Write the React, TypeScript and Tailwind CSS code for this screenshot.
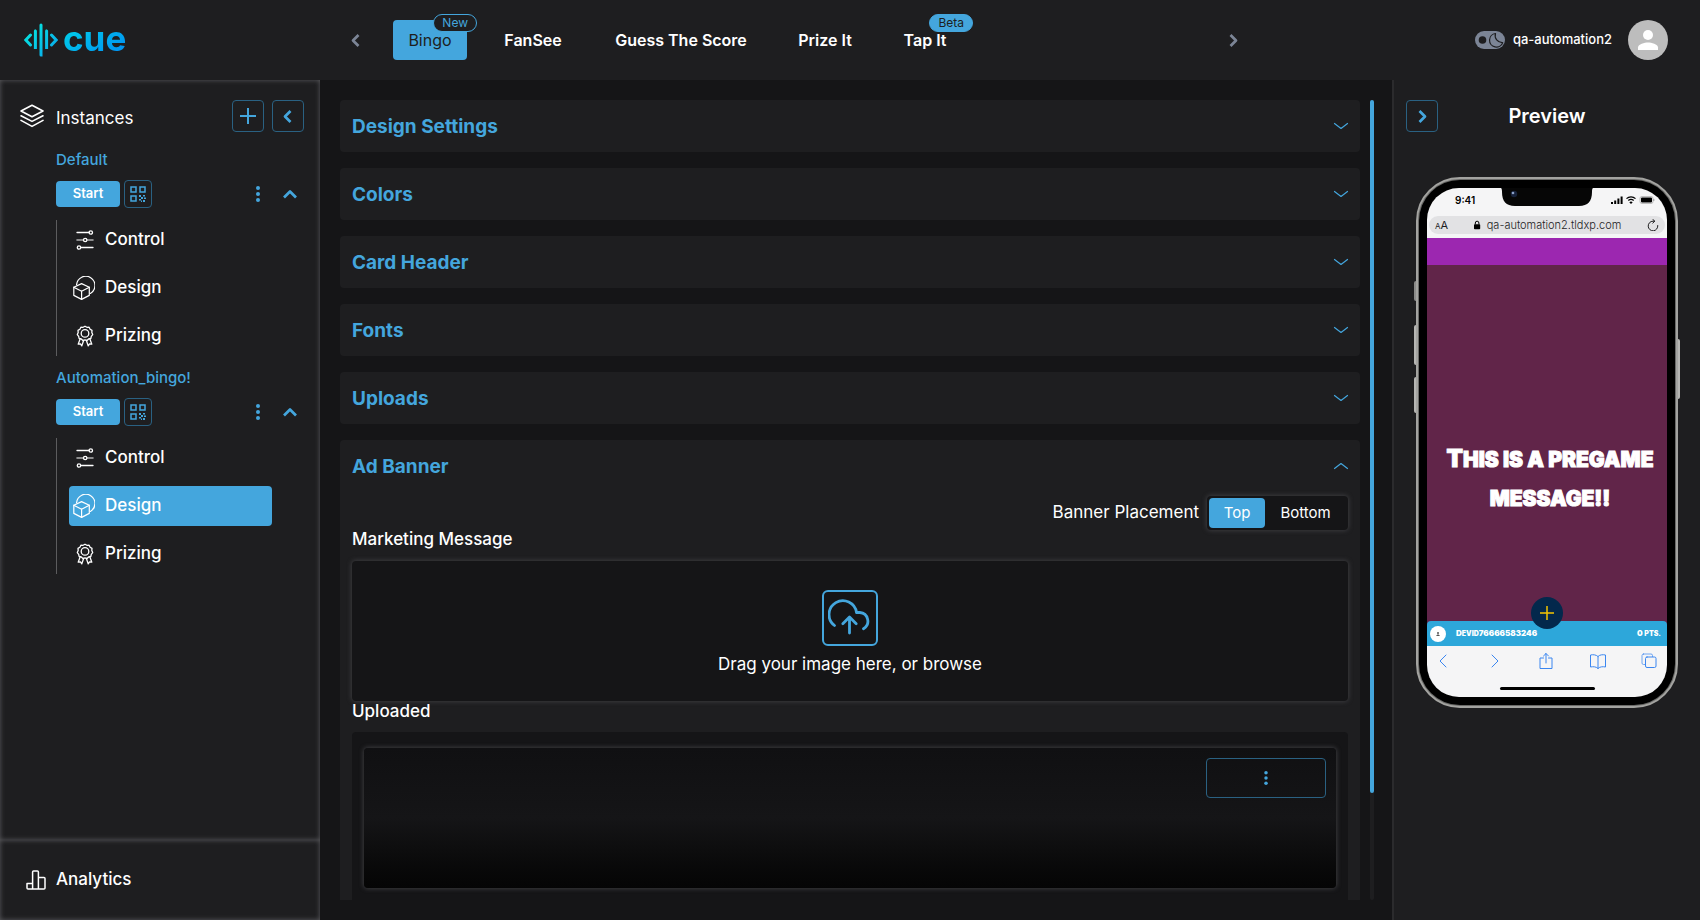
import React from "react";
import type { ReactNode } from "react";

const icon = {
  fill: "none",
  stroke: "currentColor",
  strokeLinecap: "round" as const,
  strokeLinejoin: "round" as const,
};

function Chevron({ dir }: { dir: "left" | "right" | "up" }) {
  const d = { left: "M10.5 3 5 8.5l5.5 5.5", right: "M5.5 3 11 8.5 5.5 14", up: "M2 11.5 8 5.5l6 6" }[dir];
  return (
    <svg viewBox="0 0 16 17" className="h-[17px] w-4" {...icon} strokeLinecap="butt" strokeWidth="2.7" aria-hidden="true">
      <path d={d} />
    </svg>
  );
}

function ThinChevron({ up }: { up?: boolean }) {
  return (
    <svg viewBox="0 0 16 8" className="h-2 w-4" {...icon} strokeWidth="1.2" aria-hidden="true">
      <path d={up ? "M1.5 6.5 8 1.5l6.5 5" : "M1.5 1.5 8 6.5l6.5-5"} />
    </svg>
  );
}

function Dots({ className }: { className: string }) {
  return (
    <svg viewBox="0 0 4 16" className={className} fill="currentColor" aria-hidden="true">
      <circle cx="2" cy="2" r="2" />
      <circle cx="2" cy="8" r="2" />
      <circle cx="2" cy="14" r="2" />
    </svg>
  );
}

function LogoMark() {
  return (
    <svg viewBox="0 0 34 34" className="h-[34px] w-[34px]" fill="none" strokeLinecap="round" aria-hidden="true">
      <defs>
        <linearGradient id="mark" x1="0" y1="0" x2="34" y2="34" gradientUnits="userSpaceOnUse">
          <stop offset="0" stopColor="#04f0dc" />
          <stop offset="1" stopColor="#0aa0ee" />
        </linearGradient>
      </defs>
      <g stroke="url(#mark)" strokeWidth="3">
        <path d="M6.5 12 1.8 17l4.7 5" />
        <path d="M11.4 8v18L11.41 8" />
        <path d="M17.01 2v30L17 32" />
        <path d="M22.6 8v18L22.61 8" />
        <path d="m27.5 12 4.7 5-4.7 5" />
      </g>
    </svg>
  );
}

function LayersIcon() {
  return (
    <svg viewBox="0 0 24 24" className="h-6 w-6" {...icon} strokeWidth="1.6" aria-hidden="true">
      <path d="M12 1.2 23 7 12 12.8 1 7Z" />
      <path d="m1 11.8 11 5.6 11-5.6" />
      <path d="m1 16.4 11 6 11-6" />
    </svg>
  );
}

function QrIcon() {
  return (
    <svg viewBox="0 0 16 16" className="h-4 w-4" fill="none" stroke="currentColor" strokeWidth="1.5" aria-hidden="true">
      <path d="M1 1h5v5H1zM10 1h5v5h-5zM1 10h5v5H1z" />
      <path
        d="M9 9h2v2H9zM13 9h2v1.5h-2zM11 11h2v2h-2zM9 13h2v1.5H9zM14 11.5h2v1.5h-2zM13 14h2v2h-2zM11 14.5h1V16h-1z"
        fill="currentColor"
        stroke="none"
      />
    </svg>
  );
}

function ControlIcon() {
  return (
    <svg viewBox="0 0 22 24" className="h-6 w-[22px]" {...icon} strokeWidth="1.3" aria-hidden="true">
      <path d="M4 4.5h12M8 19.5h12" />
      <path d="M4 12h6.3M14 12h6" strokeWidth="1.6" opacity="0.65" />
      <circle cx="17.8" cy="4.5" r="1.7" />
      <circle cx="12.2" cy="12" r="1.7" />
      <circle cx="6" cy="19.5" r="1.7" />
    </svg>
  );
}

function DesignIcon() {
  return (
    <svg viewBox="0 0 22 24" className="h-6 w-[22px]" {...icon} strokeWidth="1.2" aria-hidden="true">
      <path d="M3.6 8.6A9.2 9.2 0 1 1 17.4 17.4" />
      <path d="M8.6 7.6 16.3 11.2v8.2l-7.7 4L.8 19.4v-8.2Z" />
      <path d="m.8 11.2 7.8 4 7.7-4M8.6 15.2v8.2" />
    </svg>
  );
}

function PrizeIcon() {
  return (
    <svg viewBox="0 0 22 24" className="h-6 w-[22px]" {...icon} strokeWidth="1.3" aria-hidden="true">
      <path d="m12 2.2 1.9 1.1 2.2-.1 1 2 1.9 1.2-.2 2.2.9 2-1.4 1.7-.5 2.2-2.2.5-1.6 1.5-2-.7-2.1.7-1.6-1.5-2.2-.5-.4-2.2-1.4-1.7.9-2L5 6.400l1.900-1.200 1-2 2.200.1Z" />
      <circle cx="12" cy="9.4" r="3.8" />
      <path d="m7.200 14.600-2 5.600 2.300-.3 1.300 2 1.900-5.600M16.800 14.600l2 5.600-2.300-.3-1.300 2-1.900-5.600" />
    </svg>
  );
}

function AnalyticsIcon() {
  return (
    <svg viewBox="0 0 20 20" className="h-5 w-5" {...icon} strokeWidth="1.5" aria-hidden="true">
      <path d="M1 13.6h5.600V19H2a1 1 0 0 1-1-1ZM6.600 19V2a1 1 0 0 1 1-1h3.800a1 1 0 0 1 1 1v17ZM12.400 7.600H18a1 1 0 0 1 1 1V18a1 1 0 0 1-1 1h-5.600Z" />
    </svg>
  );
}

const tabs = [
  { name: "Bingo", width: "w-[74px]", badge: "New", active: true },
  { name: "FanSee", width: "w-[90px]" },
  { name: "Guess The Score", width: "w-[164px]" },
  { name: "Prize It", width: "w-[82px]" },
  { name: "Tap It", width: "w-[76px]", badge: "Beta" },
];

function Header() {
  return (
    <header className="flex h-20 shrink-0 items-center bg-[#1e1e20]">
      <div className="flex w-[340px] shrink-0 items-center gap-[5px] pl-6">
        <LogoMark />
        <span className="bg-linear-to-br from-[#04d8e4] to-[#0a86f4] bg-clip-text pb-1 text-[35px] leading-9 font-bold text-transparent">
          cue
        </span>
      </div>
      <nav className="flex w-[909px] items-center" aria-label="Games">
        <button type="button" aria-label="Previous" className="w-[53px] pl-2 text-[#7c8596]">
          <Chevron dir="left" />
        </button>
        <div className="flex flex-1 items-center gap-[21px]">
          {tabs.map((tab) => (
            <button
              key={tab.name}
              type="button"
              className={`relative h-10 shrink-0 rounded text-base ${tab.width} ${
                tab.active ? "bg-[#44a6dd] font-normal text-[#1e1e20]" : "font-semibold text-white"
              }`}
            >
              {tab.name}
              {tab.badge && (
                <span
                  className={`absolute -top-1.5 -right-2.5 flex h-[18px] items-center rounded-full border border-[#44a6dd] px-2 text-xs font-normal ${
                    tab.active ? "bg-[#1e1e20] text-[#44a6dd]" : "bg-[#44a6dd] text-[#1e1e20]"
                  }`}
                >
                  {tab.badge}
                </span>
              )}
            </button>
          ))}
        </div>
        <button type="button" aria-label="Next" className="w-6 text-[#7c8596]">
          <Chevron dir="right" />
        </button>
      </nav>
      <div className="ml-auto flex items-center pr-8">
        <button type="button" role="switch" aria-checked="true" aria-label="Dark mode" className="mr-2">
          <svg viewBox="0 0 30 18" className="h-[18px] w-[30px]" aria-hidden="true">
            <rect width="30" height="18" rx="9" fill="#7c8596" />
            <circle cx="7.5" cy="9" r="3.8" fill="#1e1e20" />
            <path
              d="M20.500 2.500a6.800 6.800 0 1 0 7.200 9.200 7.100 7.100 0 0 1-7.200-9.200Z"
              fill="none"
              stroke="#1e1e20"
              strokeWidth="1.2"
              strokeLinejoin="round"
            />
          </svg>
        </button>
        <span className="mr-4 text-[13px] font-medium text-white">qa-automation2</span>
        <button type="button" aria-label="Account" className="overflow-hidden rounded-full">
          <svg viewBox="0 0 40 40" className="h-10 w-10" aria-hidden="true">
            <rect width="40" height="40" fill="#bdbdbd" />
            <circle cx="20" cy="15" r="5" fill="#fff" />
            <path d="M20 22.500c-3.300 0-10 1.700-10 5V30h20v-2.500c0-3.300-6.700-5-10-5Z" fill="#fff" />
          </svg>
        </button>
      </div>
    </header>
  );
}

const links = [
  { name: "Control", icon: <ControlIcon /> },
  { name: "Design", icon: <DesignIcon /> },
  { name: "Prizing", icon: <PrizeIcon /> },
];

function Instance({ title, active }: { title: string; active?: string }) {
  return (
    <section className="flex flex-col">
      <h3 className="text-[15px] leading-5 font-medium text-[#44a6dd]">{title}</h3>
      <div className="mt-2.5 flex h-7 items-center text-[#44a6dd]">
        <button type="button" className="h-[26px] w-16 rounded bg-[#44a6dd] text-[13px] font-semibold text-white">
          Start
        </button>
        <button
          type="button"
          aria-label="QR code"
          className="ml-1 flex h-7 w-7 items-center justify-center rounded border border-[#2a6182]"
        >
          <QrIcon />
        </button>
        <button type="button" aria-label="More" className="ml-auto">
          <Dots className="h-4 w-4" />
        </button>
        <button type="button" aria-label="Collapse" className="mr-[22px] ml-4">
          <Chevron dir="up" />
        </button>
      </div>
      <ul className="mt-3 mr-12 flex flex-col gap-2 border-l border-[#5c5c5e] pl-3">
        {links.map((link) => (
          <li key={link.name}>
            <a
              href="#"
              className={`flex h-10 items-center gap-2.5 rounded pl-1 text-[17px] font-medium text-white ${
                link.name === active ? "bg-[#44a6dd]" : ""
              }`}
            >
              {link.icon}
              {link.name}
            </a>
          </li>
        ))}
      </ul>
    </section>
  );
}

function SquareButton({ label, children }: { label: string; children: ReactNode }) {
  return (
    <button
      type="button"
      aria-label={label}
      className="flex h-8 w-8 items-center justify-center rounded border border-[#2a6182] text-[#44a6dd]"
    >
      {children}
    </button>
  );
}

function Sidebar() {
  return (
    <aside className="flex w-80 shrink-0 flex-col">
      <div className="flex-1 bg-[#1e1e20] pt-5 shadow-[inset_0_0_5px_0_#5c5c60]">
        <div className="flex h-8 items-center gap-2 pr-4 pl-5 text-white">
          <LayersIcon />
          <h2 className="mr-auto pt-1 pl-1 text-[17px] leading-6 font-normal">Instances</h2>
          <SquareButton label="Add instance">
            <svg viewBox="0 0 16 16" className="h-4 w-4" stroke="currentColor" strokeWidth="2" aria-hidden="true">
              <path d="M8 0v16M0 8h16" />
            </svg>
          </SquareButton>
          <SquareButton label="Collapse sidebar">
            <Chevron dir="left" />
          </SquareButton>
        </div>
        <div className="mt-[18px] flex flex-col gap-3 pl-14">
          <Instance title="Default" />
          <Instance title="Automation_bingo!" active="Design" />
        </div>
      </div>
      <a
        href="#"
        className="flex h-20 items-center gap-2.5 bg-[#1e1e20] pl-[26px] text-[17px] font-medium text-white shadow-[inset_0_0_5px_0_#5c5c60]"
      >
        <AnalyticsIcon />
        Analytics
      </a>
    </aside>
  );
}

const glow = "shadow-[0_0_4px_1px_#3a3a3d]";

function AdBanner() {
  return (
    <div className="flex flex-col px-3">
      <fieldset className="mt-1 flex h-[34px] items-center justify-end gap-2 text-white">
        <span id="placement" className="text-[17px]">
          Banner Placement
        </span>
        <div role="group" aria-labelledby="placement" className={`flex rounded bg-[#151517] p-0.5 text-[15px] ${glow}`}>
          <button type="button" aria-pressed="true" className="h-[30px] w-14 rounded bg-[#44a6dd]">
            Top
          </button>
          <button type="button" aria-pressed="false" className="h-[30px] w-[81px] rounded">
            Bottom
          </button>
        </div>
      </fieldset>
      <h4 className="mt-[-3px] text-[17px] leading-6 font-medium text-white">Marketing Message</h4>
      <button
        type="button"
        className={`mt-2.5 flex h-[140px] flex-col items-center gap-1 rounded bg-[#151517] pt-[29px] text-white ${glow}`}
      >
        <span className="flex h-14 w-14 items-center justify-center rounded-md border-2 border-[#44a6dd] text-[#44a6dd]">
          <svg viewBox="0 0 44 40" className="h-10 w-11" {...icon} strokeWidth="2.8" aria-hidden="true">
            <path d="M6.500 27.500A13.800 13.800 0 1 1 28.500 14.500h3.300a8.700 8.700 0 0 1 3.700 16.200" />
            <path d="M21.500 35V20M14.800 25.800l6.700-6.700 6.700 6.700" />
          </svg>
        </span>
        <span className="text-[17px] leading-7">Drag your image here, or browse</span>
      </button>
      <h4 className="text-[17px] leading-5 font-medium text-white">Uploaded</h4>
      <div className="mt-[11px] h-[260px] rounded bg-[#151517] px-3 pt-4">
        <div
          className={`flex h-[140px] items-start justify-end rounded bg-linear-to-b from-[#101012] via-[#151517] to-[#050505] p-2.5 ${glow}`}
        >
          <button
            type="button"
            aria-label="Image options"
            className="flex h-10 w-[120px] items-center justify-center rounded border border-[#2a6182] text-[#44a6dd]"
          >
            <Dots className="h-3.5 w-3.5" />
          </button>
        </div>
      </div>
    </div>
  );
}

const panels = ["Design Settings", "Colors", "Card Header", "Fonts", "Uploads", "Ad Banner"];

function Main() {
  return (
    <main className="flex min-w-0 flex-1 gap-2.5 py-5 pr-[18px] pl-5">
      <div className="flex min-w-0 flex-1 flex-col gap-4 overflow-y-auto [scrollbar-width:none]">
        {panels.map((name) => {
          const open = name === "Ad Banner";
          return (
            <section key={name} className="shrink-0 rounded bg-[#1e1e20]">
              <button
                type="button"
                aria-expanded={open}
                className="flex h-13 w-full items-center justify-between pr-[11px] pl-3 text-[#44a6dd]"
              >
                <span className="pt-0.5 text-[19px] font-bold">{name}</span>
                <ThinChevron up={open} />
              </button>
              {open && <AdBanner />}
            </section>
          );
        })}
      </div>
      <div className="w-1 rounded-sm bg-[#1e1e20]" aria-hidden="true">
        <div className="h-[86.6%] rounded-sm bg-[#44a6dd]" />
      </div>
    </main>
  );
}

function Phone() {
  return (
    <div className="relative mx-auto mt-[45px] w-[262px]">
      <span className="absolute top-[104px] -left-0.5 h-[20px] w-1 rounded-sm bg-[#8a8a88]" />
      <span className="absolute top-[148px] -left-0.5 h-[40px] w-1 rounded-sm bg-[#b5b5b2]" />
      <span className="absolute top-[200px] -left-0.5 h-[36px] w-1 rounded-sm bg-[#b5b5b2]" />
      <span className="absolute top-[162px] -right-0.5 h-[60px] w-1 rounded-sm bg-[#b5b5b2]" />
      <div className="relative rounded-[44px] border-2 border-[#a3a3a0] bg-[#6a6a68] p-px">
        <div className="rounded-[41px] bg-black p-2">
          <div className="flex h-[509px] flex-col overflow-hidden rounded-[32px] bg-[#f5f5f6] font-['Inter']">
            <div className="relative flex h-[50px] shrink-0 flex-col px-0.5">
              <svg viewBox="0 0 94 20" className="absolute top-[-1px] left-[73px] h-5 w-[94px]" aria-hidden="true">
                <path d="M0 0c1.500 1 2 2 2 5 0 9 4 14 13 14h64c9 0 13-5 13-14 0-3 .5-4 2-5Z" fill="#060606" />
                <circle cx="14" cy="7" r="3.2" fill="#16213a" />
                <circle cx="13" cy="6" r="1.3" fill="#8aa0c8" />
              </svg>
              <div className="flex h-7 items-center justify-between pr-2.5 pl-[26px] text-[10px] text-black">
                <span className="pb-1 font-semibold">9:41</span>
                <svg viewBox="0 0 44 10" className="mb-1 h-2.5 w-11" aria-hidden="true">
                  <path d="M0 7h2v2H0zM3.200 5.500h2V9h-2zM6.400 3.500h2V9h-2zM9.600 1.500h2V9h-2z" />
                  <path
                    d="M15.500 3.600a6.500 6.500 0 0 1 9 0M17.300 5.600a4 4 0 0 1 5.400 0"
                    fill="none"
                    stroke="#000"
                    strokeWidth="1.3"
                  />
                  <path d="m20 9-1.700-1.800a2.500 2.500 0 0 1 3.400 0Z" />
                  <rect x="29" y="1.5" width="13" height="7" rx="1.8" fill="none" stroke="#999" strokeWidth=".6" />
                  <rect x="30" y="2.4" width="11" height="5.2" rx="1" />
                  <path d="M42.800 4v2" stroke="#888" strokeWidth=".8" />
                </svg>
              </div>
              <div className="flex h-[18px] items-center rounded-full bg-[#e2e2e4] px-1.5 text-[#1d1d1f]">
                <span className="flex w-9 items-baseline text-[11px] leading-none">
                  <span className="text-[8px]">A</span>A
                </span>
                <div className="flex flex-1 items-center justify-center gap-1.5 text-[11px]">
                  <svg viewBox="0 0 8 10" className="h-2.5 w-2" aria-hidden="true">
                    <rect x="1" y="4.2" width="6.2" height="5" rx=".8" />
                    <path d="M2.300 4.500V3a1.800 1.800 0 0 1 3.600 0v1.500" fill="none" stroke="#000" strokeWidth="1" />
                  </svg>
                  <span className="font-light">qa-automation2.tldxp.com</span>
                </div>
                <svg viewBox="0 0 12 12" className="ml-6 h-3 w-3" {...icon} strokeWidth="1" aria-hidden="true">
                  <path d="M10.800 6.500A4.800 4.800 0 1 1 6 2.200h1.500M5.800.4l2 1.800-2 1.900" />
                </svg>
              </div>
            </div>
            <div className="h-[27px] shrink-0 bg-[#9c27b0]" />
            <div className="relative flex flex-1 flex-col bg-[#612549]">
              <p className="mt-[175px] pl-1.5 text-center text-[21px] leading-[39px] font-black whitespace-nowrap text-white [-webkit-text-stroke:1px_white]">
                <span className="text-2xl leading-none">T</span>HIS IS A PREGAME
                <br />
                MESSAGE!!
              </p>
              <div className="mt-auto flex h-[25px] items-center rounded-t-sm bg-[#2da7da] pr-1.5 pl-[3px] text-white">
                <svg viewBox="0 0 16 16" className="h-4 w-4" aria-hidden="true">
                  <circle cx="8" cy="8" r="8" fill="#fff" />
                  <circle cx="8" cy="7" r="1" fill="#555" />
                  <path d="M6.300 10c0-2 3.400-2 3.400 0Z" fill="#555" />
                </svg>
                <span className="ml-2.5 text-[8px] font-black">
                  D<span className="text-[7px]">EVID</span>76666583246
                </span>
                <span className="ml-auto text-[8px] font-black">
                  0 <span className="text-[7px]">PTS.</span>
                </span>
              </div>
              <button
                type="button"
                aria-label="Open menu"
                className="absolute bottom-[17px] left-1/2 flex h-8 w-8 -translate-x-1/2 items-center justify-center rounded-full bg-[#03284c] text-[#f5c400]"
              >
                <svg viewBox="0 0 14 14" className="h-3.5 w-3.5" stroke="currentColor" strokeWidth="1.5" aria-hidden="true">
                  <path d="M7 0v14M0 7h14" />
                </svg>
              </button>
            </div>
            <div className="flex h-[51px] shrink-0 flex-col items-center justify-between pt-1.5 pb-[7px] text-[#3b86f0]">
              <svg viewBox="0 0 240 18" className="h-[18px] w-full" {...icon} strokeWidth="1" aria-hidden="true">
                <path d="m19 3-6 6 6 6M65 3l6 6-6 6" />
                <path d="M116.500 6H113v10.500h12V6h-3.500M119 11V1.500M116.500 4l2.500-2.500 2.500 2.500" />
                <path d="M171 4.500c-2-2-5-2-7.500-1.500v12c2.500-.5 5.500-.5 7.500 1.500 2-2 5-2 7.500-1.500V3c-2.500-.5-5.500-.5-7.500 1.500v12" />
                <rect x="215" y="2" width="10.5" height="10.5" rx="1.5" opacity=".7" />
                <rect x="218.500" y="5" width="10.5" height="10.5" rx="1.5" fill="#f5f5f6" />
              </svg>
              <span className="h-[3px] w-[95px] rounded-full bg-black" />
            </div>
          </div>
        </div>
      </div>
    </div>
  );
}

function Preview() {
  return (
    <aside className="w-[308px] shrink-0 border-l-2 border-[#2b2b2d] bg-[#1e1e20] pt-5">
      <div className="flex h-8 items-center pl-3">
        <SquareButton label="Collapse preview">
          <Chevron dir="right" />
        </SquareButton>
        <h2 className="flex-1 pr-11 text-center text-xl font-semibold text-white">Preview</h2>
      </div>
      <Phone />
    </aside>
  );
}

export default function App() {
  return (
    <div className="flex h-screen flex-col overflow-hidden bg-[#151517] font-['Inter','Liberation_Sans',sans-serif]">
      <Header />
      <div className="flex min-h-0 flex-1">
        <Sidebar />
        <Main />
        <Preview />
      </div>
    </div>
  );
}
